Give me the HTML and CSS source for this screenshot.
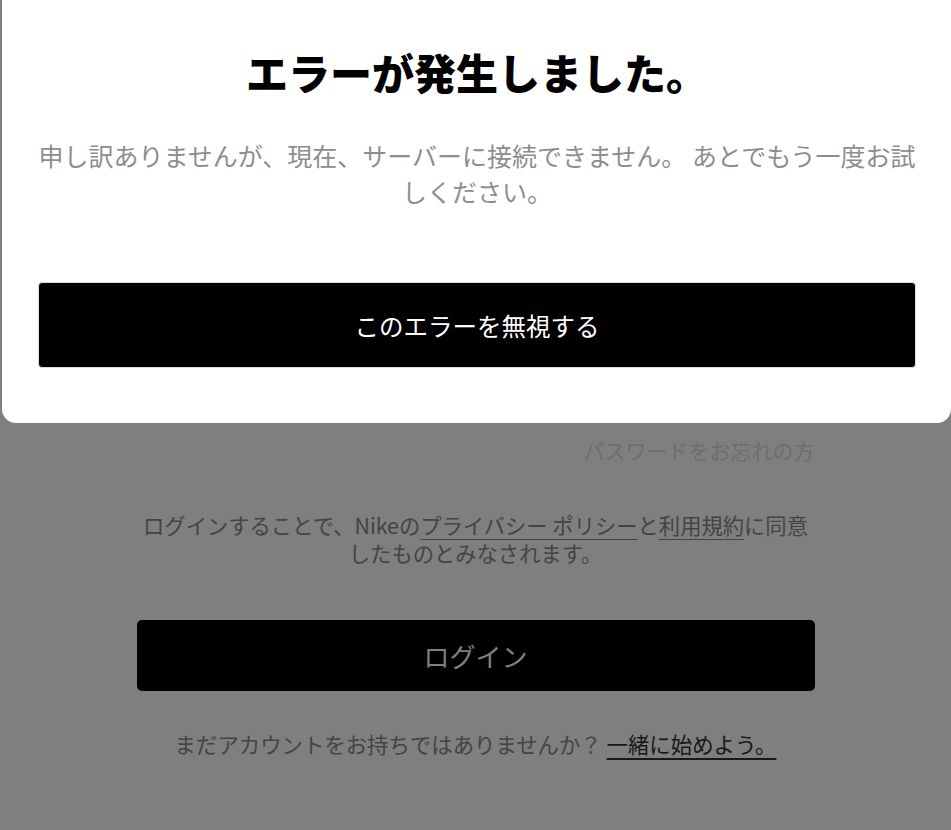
FILE: index.html
```html
<!DOCTYPE html>
<html lang="ja">
<head>
<meta charset="utf-8">
<title>ログイン</title>
<link rel="stylesheet" href="styles.css">
</head>
<body>
<main class="page">
  <a class="forgot" href="#">パスワードをお忘れの方</a>
  <p class="terms">ログインすることで、Nikeの<a href="#">プライバシー ポリシー</a>と<a href="#">利用規約</a>に同意したものとみなされます。</p>
  <button class="login-btn" type="button">ログイン</button>
  <p class="signup">まだアカウントをお持ちではありませんか？ <a href="#">一緒に始めよう。</a></p>
</main>
<div class="overlay"></div>
<section class="modal" role="dialog">
  <h1 class="modal-title">エラーが発生しました。</h1>
  <p class="modal-text">申し訳ありませんが、現在、サーバーに接続できません。 あとでもう一度お試しください。</p>
  <button class="modal-btn" type="button">このエラーを無視する</button>
</section>
</body>
</html>
```
FILE: styles.css
```css
* { box-sizing: border-box; }
html, body {
  margin: 0;
  padding: 0;
  background: #ffffff;
  font-family: "Noto Sans CJK JP", "Noto Sans", sans-serif;
  min-height: 830px;
}
.page {
  width: 678px;
  margin: 0 auto;
  padding-top: 436px;
  display: flex;
  flex-direction: column;
}
.forgot {
  align-self: flex-end;
  font-size: 21px;
  line-height: 28px;
  color: #dcdcdc;
  text-decoration: none;
}
.terms {
  margin: 47px 0 0;
  padding: 0 4px;
  font-size: 21.3px;
  line-height: 28px;
  color: #888888;
  text-align: center;
}
.terms a {
  color: #888888;
  text-decoration: underline;
  text-underline-offset: 5px;
  text-decoration-thickness: 1px;
}
.login-btn {
  margin-top: 53px;
  height: 71px;
  width: 100%;
  border: none;
  border-radius: 5px;
  background: #000000;
  color: #ffffff;
  font-family: inherit;
  font-size: 26px;
}
.signup {
  margin: 39px 0 0;
  font-size: 21.4px;
  line-height: 28px;
  color: #888888;
  text-align: center;
}
.signup a {
  color: #333333;
  text-decoration: underline;
  text-underline-offset: 5px;
  text-decoration-thickness: 2px;
}
.overlay {
  position: fixed;
  inset: 0;
  background: rgba(0, 0, 0, 0.5);
}
.modal {
  position: fixed;
  top: 0;
  left: 2px;
  right: 0;
  background: #ffffff;
  border-radius: 0 0 14px 14px;
  padding: 44px 35px 55px 36px;
  display: flex;
  flex-direction: column;
  align-items: stretch;
  text-align: center;
}
.modal-title {
  margin: 0;
  font-size: 42px;
  line-height: 56px;
  font-weight: 900;
  color: #000000;
}
.modal-text {
  margin: 37px -4px 0;
  font-size: 25px;
  line-height: 36px;
  color: #8d8d8d;
}
.modal-btn {
  margin-top: 73px;
  height: 86px;
  border: 1px solid #dddddd;
  border-radius: 4px;
  background: #000000;
  color: #ffffff;
  font-family: inherit;
  font-size: 24.5px;
}
```
